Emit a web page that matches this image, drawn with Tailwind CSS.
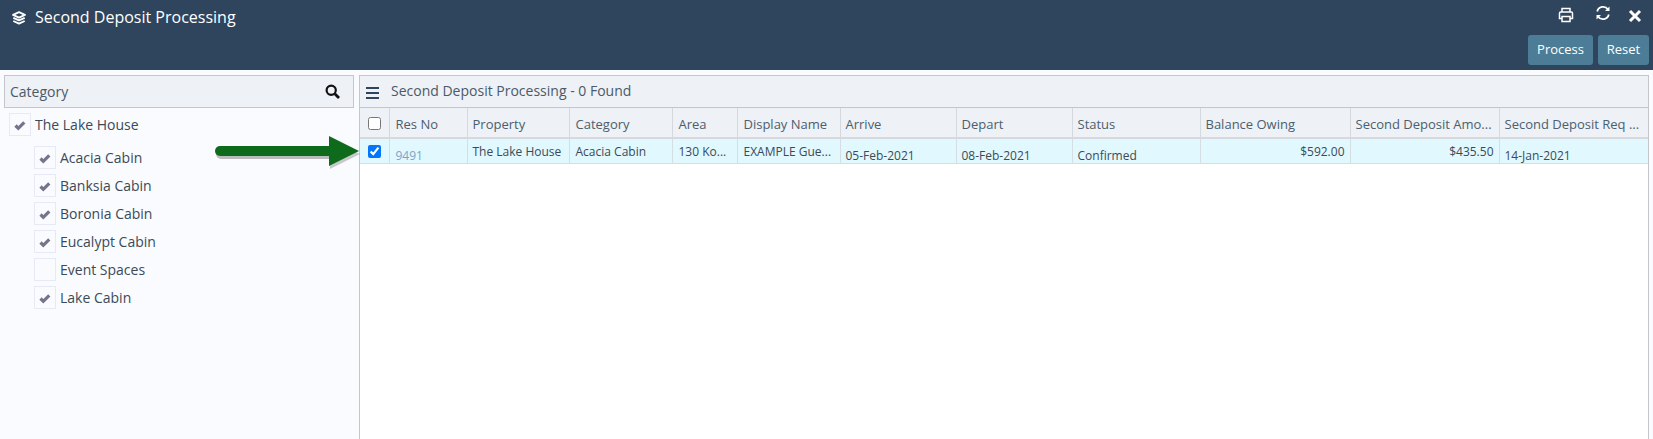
<!DOCTYPE html>
<html>
  <head>
    <title>Second Deposit Processing</title>
    <script src="https://cdn.jsdelivr.net/npm/@tailwindcss/browser@4"></script>
  </head>
  <body class="relative h-[439px] overflow-hidden bg-[#f9fbfe] font-['Open_Sans','Noto_Sans',sans-serif] text-[#3b4a57]">
    <!-- top bar -->
    <div class="h-[70px] bg-[#2e455d] text-white flex justify-between">
      <div class="flex items-start pl-3 pt-[6px] gap-[9px]">
        <svg class="w-[14px] h-[14px] mt-[5px]" viewBox="0 0 16 16" fill="none" stroke="white" stroke-width="2.100" stroke-linejoin="round">
          <path d="M8 1.200l6.800 3.200L8 7.600 1.200 4.400z"/>
          <path d="M1.500 7.800L8 10.800l6.500-3"/>
          <path d="M1.500 11.400L8 14.500l6.500-3.100"/>
        </svg>
        <span class="text-[16px] leading-[22px]">Second Deposit Processing</span>
      </div>
      <div class="flex flex-col items-end">
        <div class="flex h-[35px] items-start pr-[11px]">
          <svg class="w-[16px] h-[16px] mt-[7px]" viewBox="0 0 16 16" fill="none" stroke="white" stroke-width="1.500">
            <path d="M4 5V1.500h8V5"/>
            <path d="M4 11.500H1.500V6.200q0-1.200 1.200-1.200h10.600q1.200 0 1.200 1.200v5.300H12"/>
            <path d="M4 9.500h8v5H4z"/>
          </svg>
          <svg class="w-[16px] h-[16px] mt-[5px] ml-[21px]" viewBox="0 0 16 16" fill="none" stroke="white" stroke-width="1.800">
            <path d="M2.200 6.500A6 6 0 0 1 13 4.500"/>
            <path d="M13.800 9.500A6 6 0 0 1 3 11.500"/>
            <path d="M14.500 1.500v4.500H10z" fill="white" stroke="none"/>
            <path d="M1.500 14.500V10H6z" fill="white" stroke="none"/>
          </svg>
          <svg class="w-[14px] h-[14px] mt-[9px] ml-[17px]" viewBox="0 0 14 14" fill="none" stroke="white" stroke-width="3">
            <path d="M2 2l10 10M12 2L2 12"/>
          </svg>
        </div>
        <div class="flex gap-[5px] pr-[4px]">
          <button class="w-[65px] h-[30px] rounded-[3px] bg-[#4d7d96] text-[13px] text-white">Process</button>
          <button class="w-[51px] h-[30px] rounded-[3px] bg-[#4d7d96] text-[13px] text-white">Reset</button>
        </div>
      </div>
    </div>

    <div class="flex pt-[5px] pl-[4px] pr-[5px] gap-[5px]">
      <!-- category tree -->
      <div class="w-[350px] shrink-0">
        <div class="h-[33px] flex items-center justify-between border border-[#c3c6ca] bg-[#eef1f5] pl-[5px] pr-[13px] text-[14px] text-[#4a5a68]">
          <span>Category</span>
          <svg class="w-[15px] h-[15px]" viewBox="0 0 15 15" fill="none" stroke="#111" stroke-width="2.200">
            <circle cx="6.200" cy="6.200" r="4.600"/>
            <path d="M9.800 9.800L14 14" stroke-width="2.800"/>
          </svg>
        </div>
        <div class="flex items-center gap-[4px] pl-[5px] mt-[5px] h-[23px] text-[14px]">
          <span class="w-[22px] h-[23px] border border-[#e6e9f6] flex items-center justify-center">
            <svg class="w-[12px] h-[12px]" viewBox="0 0 12 12" fill="none" stroke="#74748a" stroke-width="3.200"><path d="M1.500 6.500l2.800 2.800 6-6"/></svg>
          </span>
          <span>The Lake House</span>
        </div>
        <div class="flex flex-col gap-[5px] pl-[30px] pt-[10px] text-[14px]">
          <div class="flex items-center gap-[4px] h-[23px]">
            <span class="w-[22px] h-[23px] border border-[#e6e9f6] flex items-center justify-center">
              <svg class="w-[12px] h-[12px]" viewBox="0 0 12 12" fill="none" stroke="#74748a" stroke-width="3.200"><path d="M1.500 6.500l2.800 2.800 6-6"/></svg>
            </span>
            <span>Acacia Cabin</span>
          </div>
          <div class="flex items-center gap-[4px] h-[23px]">
            <span class="w-[22px] h-[23px] border border-[#e6e9f6] flex items-center justify-center">
              <svg class="w-[12px] h-[12px]" viewBox="0 0 12 12" fill="none" stroke="#74748a" stroke-width="3.200"><path d="M1.500 6.500l2.800 2.800 6-6"/></svg>
            </span>
            <span>Banksia Cabin</span>
          </div>
          <div class="flex items-center gap-[4px] h-[23px]">
            <span class="w-[22px] h-[23px] border border-[#e6e9f6] flex items-center justify-center">
              <svg class="w-[12px] h-[12px]" viewBox="0 0 12 12" fill="none" stroke="#74748a" stroke-width="3.200"><path d="M1.500 6.500l2.800 2.800 6-6"/></svg>
            </span>
            <span>Boronia Cabin</span>
          </div>
          <div class="flex items-center gap-[4px] h-[23px]">
            <span class="w-[22px] h-[23px] border border-[#e6e9f6] flex items-center justify-center">
              <svg class="w-[12px] h-[12px]" viewBox="0 0 12 12" fill="none" stroke="#74748a" stroke-width="3.200"><path d="M1.500 6.500l2.800 2.800 6-6"/></svg>
            </span>
            <span>Eucalypt Cabin</span>
          </div>
          <div class="flex items-center gap-[4px] h-[23px]">
            <span class="w-[22px] h-[23px] border border-[#e6e9f6]"></span>
            <span>Event Spaces</span>
          </div>
          <div class="flex items-center gap-[4px] h-[23px]">
            <span class="w-[22px] h-[23px] border border-[#e6e9f6] flex items-center justify-center">
              <svg class="w-[12px] h-[12px]" viewBox="0 0 12 12" fill="none" stroke="#74748a" stroke-width="3.200"><path d="M1.500 6.500l2.800 2.800 6-6"/></svg>
            </span>
            <span>Lake Cabin</span>
          </div>
        </div>
      </div>

      <!-- results grid -->
      <div class="flex-1 h-[364px] border-l border-r border-[#c3c6ca] bg-white">
        <div class="h-[33px] flex items-center gap-[12px] border-y border-[#c3c6ca] bg-[#eef1f5] pl-[6px] text-[14px] text-[#4a5a68]">
          <svg class="w-[13px] h-[12px] mt-[3px]" viewBox="0 0 13 12" fill="#2e455d">
            <rect y="0" width="13" height="2"/><rect y="5" width="13" height="2"/><rect y="10" width="13" height="2"/>
          </svg>
          <span class="-mt-[2px]">Second Deposit Processing - 0 Found</span>
        </div>
        <table class="table-fixed w-[1288px] border-collapse text-[12px] leading-[14px]">
          <colgroup>
            <col class="w-[29px]"><col class="w-[78px]"><col class="w-[102px]"><col class="w-[103px]"><col class="w-[65px]"><col class="w-[103px]"><col class="w-[116px]"><col class="w-[116px]"><col class="w-[128px]"><col class="w-[150px]"><col class="w-[149px]"><col class="w-[149px]">
          </colgroup>
          <thead>
            <tr class="h-[30px] bg-[#eef1f5] text-[13px] text-[#4a5f70] border-b-2 border-[#d5d8dc]">
              <th class="border-r border-[#d5d8dc] font-normal pt-[2px]"><input type="checkbox" class="block mx-auto w-[13px] h-[13px]"></th>
              <th class="border-r border-[#d5d8dc] font-normal text-left pl-[6px] pt-[2px] truncate">Res No</th>
              <th class="border-r border-[#d5d8dc] font-normal text-left pl-[5px] pt-[2px] truncate">Property</th>
              <th class="border-r border-[#d5d8dc] font-normal text-left pl-[6px] pt-[2px] truncate">Category</th>
              <th class="border-r border-[#d5d8dc] font-normal text-left pl-[6px] pt-[2px] truncate">Area</th>
              <th class="border-r border-[#d5d8dc] font-normal text-left pl-[6px] pt-[2px] truncate">Display Name</th>
              <th class="border-r border-[#d5d8dc] font-normal text-left pl-[5px] pt-[2px] truncate">Arrive</th>
              <th class="border-r border-[#d5d8dc] font-normal text-left pl-[5px] pt-[2px] truncate">Depart</th>
              <th class="border-r border-[#d5d8dc] font-normal text-left pl-[5px] pt-[2px] truncate">Status</th>
              <th class="border-r border-[#d5d8dc] font-normal text-left pl-[5px] pt-[2px] truncate">Balance Owing</th>
              <th class="border-r border-[#d5d8dc] font-normal text-left pl-[5px] pt-[2px]">Second Deposit Amo...</th>
              <th class="font-normal text-left pl-[5px] pt-[2px]">Second Deposit Req ...</th>
            </tr>
          </thead>
          <tbody>
            <tr class="h-[25px] bg-[#e1f8fe] border-b border-[#d5dee2]">
              <td class="border-r border-[#d5dee2]"><input type="checkbox" checked class="block mx-auto w-[13px] h-[13px]"></td>
              <td class="border-r border-[#d5dee2] pl-[6px] pt-[10px] text-[#7fa3c7]">9491</td>
              <td class="border-r border-[#d5dee2] pl-[5px] pt-[2px]">The Lake House</td>
              <td class="border-r border-[#d5dee2] pl-[6px] pt-[2px]">Acacia Cabin</td>
              <td class="border-r border-[#d5dee2] pl-[6px] pt-[2px]">130 Ko...</td>
              <td class="border-r border-[#d5dee2] pl-[6px] pt-[2px]">EXAMPLE Gue...</td>
              <td class="border-r border-[#d5dee2] pl-[5px] pt-[10px]">05-Feb-2021</td>
              <td class="border-r border-[#d5dee2] pl-[5px] pt-[10px]">08-Feb-2021</td>
              <td class="border-r border-[#d5dee2] pl-[5px] pt-[10px]">Confirmed</td>
              <td class="border-r border-[#d5dee2] pr-[5px] pt-[2px] text-right">$592.00</td>
              <td class="border-r border-[#d5dee2] pr-[5px] pt-[2px] text-right">$435.50</td>
              <td class="pl-[5px] pt-[10px]">14-Jan-2021</td>
            </tr>
          </tbody>
        </table>
      </div>
    </div>

    <!-- annotation arrow -->
    <svg class="absolute left-[210px] top-[132px] w-[155px] h-[40px]" viewBox="0 0 155 40">
      <path d="M10 19H120" stroke="#000" stroke-opacity="0.25" stroke-width="10" stroke-linecap="round" transform="translate(1 3)"/>
      <path d="M119 4l30 15-30 15z" fill="#000" fill-opacity="0.2" transform="translate(1 3)"/>
      <path d="M10 19H120" stroke="#0f6b1c" stroke-width="10" stroke-linecap="round"/>
      <path d="M119 4l30 15-30 15z" fill="#0f6b1c"/>
    </svg>
  </body>
</html>
